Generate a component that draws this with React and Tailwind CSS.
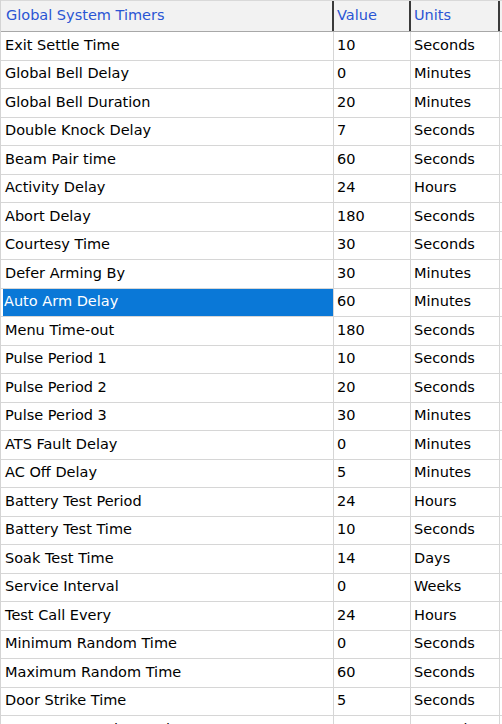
import React from "react";

const rows = [
  ["Exit Settle Time", "10", "Seconds"],
  ["Global Bell Delay", "0", "Minutes"],
  ["Global Bell Duration", "20", "Minutes"],
  ["Double Knock Delay", "7", "Seconds"],
  ["Beam Pair time", "60", "Seconds"],
  ["Activity Delay", "24", "Hours"],
  ["Abort Delay", "180", "Seconds"],
  ["Courtesy Time", "30", "Seconds"],
  ["Defer Arming By", "30", "Minutes"],
  ["Auto Arm Delay", "60", "Minutes"],
  ["Menu Time-out", "180", "Seconds"],
  ["Pulse Period 1", "10", "Seconds"],
  ["Pulse Period 2", "20", "Seconds"],
  ["Pulse Period 3", "30", "Minutes"],
  ["ATS Fault Delay", "0", "Minutes"],
  ["AC Off Delay", "5", "Minutes"],
  ["Battery Test Period", "24", "Hours"],
  ["Battery Test Time", "10", "Seconds"],
  ["Soak Test Time", "14", "Days"],
  ["Service Interval", "0", "Weeks"],
  ["Test Call Every", "24", "Hours"],
  ["Minimum Random Time", "0", "Seconds"],
  ["Maximum Random Time", "60", "Seconds"],
  ["Door Strike Time", "5", "Seconds"],
  ["Door Contact Time/Delay", "0", "Seconds"],
];

const selected = 9;

export default function App() {
  return (
    <div
      className="w-[502px] h-[724px] overflow-hidden bg-white border-l border-[#d4d4d4] text-[14.5px] text-black"
      style={{ fontFamily: '"DejaVu Sans", Tahoma, sans-serif' }}
    >
      <div className="grid grid-cols-[333px_77px_89px] h-[32px] bg-[#f2f2f2] border-t border-[#d9d9d9] border-b border-b-[#a8a8a8] text-[#2a55d4]">
        <div className="flex items-center pl-[5px] border-r-2 border-[#3a3a3a]">Global System Timers</div>
        <div className="flex items-center pl-[3px] border-r-2 border-[#3a3a3a]">Value</div>
        <div className="flex items-center pl-[3px] border-r-2 border-[#3a3a3a]">Units</div>
      </div>
      {rows.map((r, i) => (
        <div
          key={r[0]}
          className="grid grid-cols-[333px_77px_89px] h-[28.5px] border-b border-[#d6d6d6]"
        >
          <div
            className={`flex items-center border-r border-[#d6d6d6] ${
              i === selected ? "bg-[#0a78d7] text-white ml-[2px] pl-[1px]" : "pl-[4px]"
            }`}
          >
            {r[0]}
          </div>
          <div className="flex items-center pl-[3px] border-r border-[#d6d6d6]">{r[1]}</div>
          <div className="flex items-center pl-[3px] border-r border-[#d6d6d6]">{r[2]}</div>
        </div>
      ))}
    </div>
  );
}
